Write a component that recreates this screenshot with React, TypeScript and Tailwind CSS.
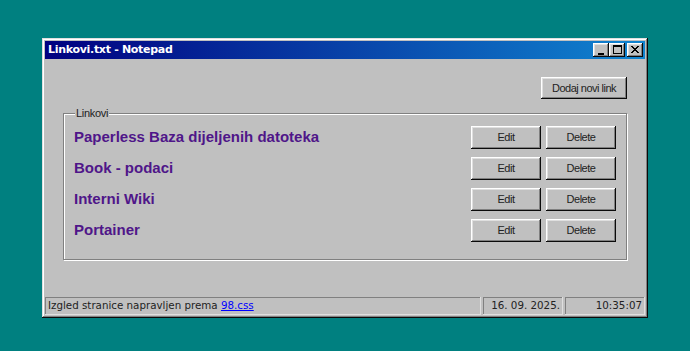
import React from 'react';

const bevel =
  'shadow-[inset_-1px_-1px_#0a0a0a,inset_1px_1px_#ffffff,inset_-2px_-2px_#808080,inset_2px_2px_#dfdfdf]';

const links = ['Paperless Baza dijeljenih datoteka', 'Book - podaci', 'Interni Wiki', 'Portainer'];

const Btn: React.FC<{ label: string; className?: string }> = ({ label, className = '' }) => (
  <button
    className={`${bevel} bg-[#c0c0c0] text-[11px] tracking-[-0.5px] text-[#222] font-['Liberation_Sans',Arial,sans-serif] flex items-center justify-center ${className}`}
  >
    {label}
  </button>
);

const Ctl: React.FC<{ children: React.ReactNode; className?: string }> = ({ children, className = '' }) => (
  <button className={`${bevel} bg-[#c0c0c0] w-[16px] h-[14px] flex items-center justify-center ${className}`}>
    {children}
  </button>
);

export default function App() {
  return (
    <div className="min-h-screen bg-[#008080] pl-[42px] pt-[38px]">
      <div className="w-[606px] h-[280px] bg-[#c0c0c0] p-[3px] flex flex-col shadow-[inset_-1px_-1px_#0a0a0a,inset_1px_1px_#dfdfdf,inset_-2px_-2px_#808080,inset_2px_2px_#ffffff]">
        {/* title bar */}
        <div className="h-[18px] bg-[linear-gradient(90deg,#000080,#1084d0)] flex items-center justify-between pl-[3px] pr-[2px]">
          <span className="text-white font-bold text-[11px] tracking-[-0.3px] font-['DejaVu_Sans',sans-serif]">
            Linkovi.txt - Notepad
          </span>
          <div className="flex">
            <Ctl>
              <svg width="6" height="2" className="mt-[7px] mr-[1px]"><rect width="6" height="2" fill="#000" /></svg>
            </Ctl>
            <Ctl>
              <svg width="9" height="9" className="mb-[1px]">
                <path d="M0 0h9v2H0zM0 0h1v9H0zM8 0h1v9H8zM0 8h9v1H0z" fill="#000" />
              </svg>
            </Ctl>
            <Ctl className="ml-[2px]">
              <svg width="8" height="7" className="mb-[1px]">
                <path d="M0 0h2v1h1v1h2V1h1V0h2v1H7v1H6v1H5v1h1v1h1v1h1v1H6V6H5V5H3v1H2v1H0V6h1V5h1V4h1V3H2V2H1V1H0z" fill="#000" />
              </svg>
            </Ctl>
          </div>
        </div>

        {/* body */}
        <div className="flex-1 flex flex-col px-[18px] pt-[18px]">
          <div className="flex justify-end">
            <Btn label="Dodaj novi link" className="w-[86px] h-[22px]" />
          </div>
          <fieldset className="mt-[6px] h-[155px] border border-[#808080] shadow-[1px_1px_0_#ffffff,inset_1px_1px_0_#ffffff] pl-[10px] pr-[10px] pt-[4px]">
            <legend className="ml-[1px] px-[1px] text-[11px] tracking-[-0.3px] text-[#222] font-['Liberation_Sans',Arial,sans-serif] bg-[#c0c0c0]">
              Linkovi
            </legend>
            <div className="flex flex-col gap-[8px]">
              {links.map((l) => (
                <div key={l} className="flex items-center justify-between h-[23px]">
                  <a className="text-[15px] font-bold text-[#4f1689] font-['Liberation_Sans',Arial,sans-serif]">{l}</a>
                  <div className="flex gap-[5px]">
                    <Btn label="Edit" className="w-[70px] h-[23px]" />
                    <Btn label="Delete" className="w-[70px] h-[23px]" />
                  </div>
                </div>
              ))}
            </div>
          </fieldset>
        </div>

        {/* status bar */}
        <div className="flex gap-[2px] h-[18px] text-[10.3px] text-[#222] font-['DejaVu_Sans',sans-serif]">
          <div className="flex-1 px-[3px] flex items-center shadow-[inset_-1px_-1px_#dfdfdf,inset_1px_1px_#808080]">
            Izgled stranice napravljen prema&nbsp;
            <a className="text-[#0000ff] underline">98.css</a>
          </div>
          <div className="w-[80px] px-[3px] flex items-center justify-end shadow-[inset_-1px_-1px_#dfdfdf,inset_1px_1px_#808080]">
            16. 09. 2025.
          </div>
          <div className="w-[80px] px-[3px] flex items-center justify-end shadow-[inset_-1px_-1px_#dfdfdf,inset_1px_1px_#808080]">
            10:35:07
          </div>
        </div>
      </div>
    </div>
  );
}
